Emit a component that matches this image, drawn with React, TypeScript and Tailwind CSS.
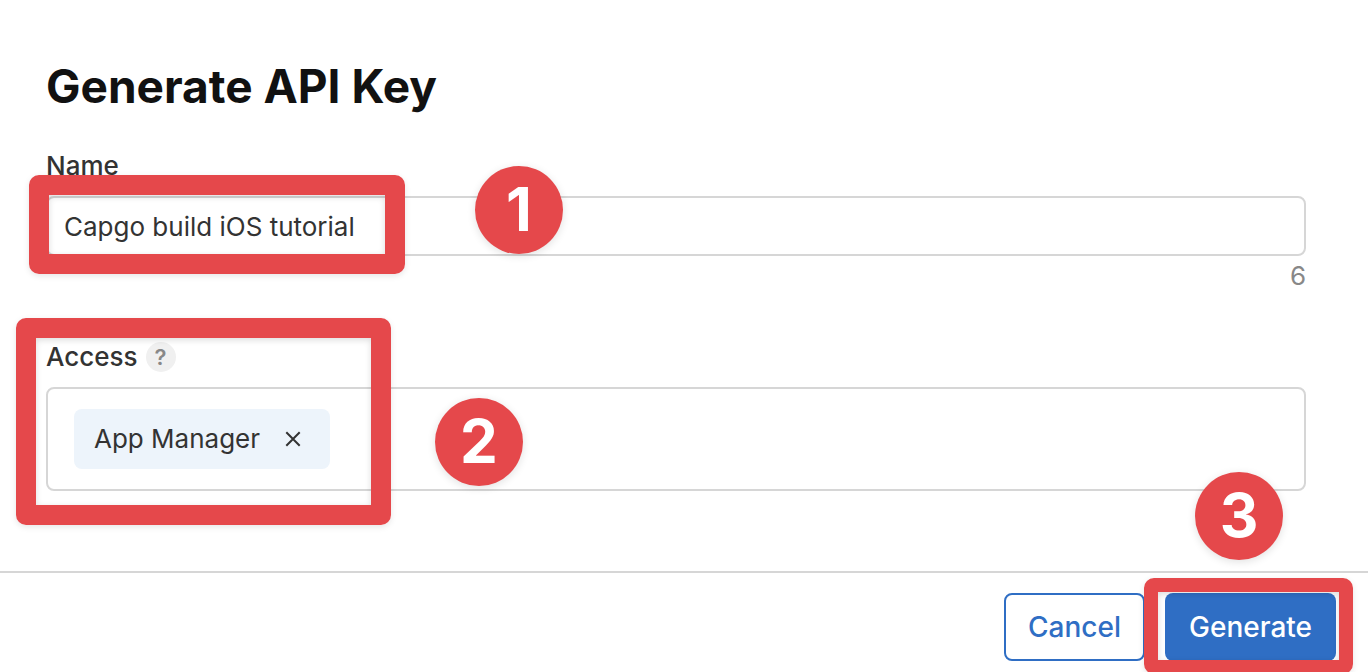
import { useState } from "react";
import type { ReactNode } from "react";

function Frame({ className }: { className: string }) {
  return (
    <div
      aria-hidden="true"
      className={`pointer-events-none absolute rounded-[10px] border-[#e5484b] shadow-[0_2px_6px_rgba(0,0,0,0.1),inset_0_2px_6px_rgba(0,0,0,0.14)] ${className}`}
    />
  );
}

function Step({ className, children }: { className: string; children: ReactNode }) {
  return (
    <span
      className={`pointer-events-none absolute flex size-[88px] items-center justify-center rounded-full bg-[#e5484b] pb-0.5 text-[60px] leading-none font-bold text-white shadow-[0_2px_8px_rgba(0,0,0,0.12)] ${className}`}
    >
      {children}
    </span>
  );
}

export default function App() {
  const [name, setName] = useState("Capgo build iOS tutorial");
  const [roles, setRoles] = useState(["App Manager"]);

  return (
    <form
      onSubmit={(e) => e.preventDefault()}
      className="flex min-h-screen flex-col overflow-hidden bg-white font-['Inter',sans-serif] text-[26px] leading-8 text-[#333]"
    >
      <main className="flex flex-col pt-14 pr-[62px] pb-20 pl-[46px]">
        <h1 className="text-[46px] leading-[60px] font-bold text-[#111]">Generate API Key</h1>

        <section className="mt-[34px] flex flex-col">
          <label htmlFor="key-name" className="font-medium">
            Name
          </label>
          <div className="relative mt-3.5">
            <input
              id="key-name"
              type="text"
              value={name}
              onChange={(e) => setName(e.target.value)}
              className="block h-[60px] w-full rounded-lg border-2 border-[#d6d6d6] px-4 outline-none"
            />
            <Frame className="-top-[21px] -left-[17px] h-[99px] w-[376px] border-[20px]" />
            <Step className="-top-[30px] left-[429px]">1</Step>
          </div>
          <output htmlFor="key-name" className="mt-1 self-end text-[#888]">
            {30 - name.length}
          </output>
        </section>

        <section className="relative mt-[49px] flex flex-col gap-3.5">
          <div className="flex items-center gap-2">
            <h2 id="access-label" className="font-medium">
              Access
            </h2>
            <button
              type="button"
              aria-label="About access"
              className="flex size-[30px] items-center justify-center rounded-full bg-[#f0f0f0] text-[22px] leading-none font-semibold text-[#888]"
            >
              ?
            </button>
          </div>
          <ul
            aria-labelledby="access-label"
            className="flex min-h-[104px] items-center gap-4 rounded-lg border-2 border-[#d6d6d6] px-[26px]"
          >
            {roles.map((role) => (
              <li key={role} className="flex h-[60px] items-center gap-6 rounded-lg bg-[#edf4fb] px-5">
                {role}
                <button
                  type="button"
                  aria-label={`Remove ${role}`}
                  onClick={() => setRoles(roles.filter((r) => r !== role))}
                  className="pr-2"
                >
                  <svg viewBox="0 0 18 18" className="size-[18px]" fill="none" stroke="currentColor" strokeWidth="2">
                    <path d="M2.3 2.3 15.7 15.7M15.7 2.3 2.3 15.7" />
                  </svg>
                </button>
              </li>
            ))}
          </ul>
          <Frame className="-top-[23px] -left-[30px] h-[207px] w-[375px] border-[20px]" />
          <Step className="top-[57px] left-[389px]">2</Step>
        </section>
      </main>

      <footer className="flex h-[101px] items-start justify-end gap-5 border-t-2 border-[#d6d6d6] pt-5 pr-8 text-[28px] font-medium">
        <button
          type="button"
          className="h-[68px] rounded-lg border-2 border-[#2f6ec4] px-[22px] text-[#2f6ec4]"
        >
          Cancel
        </button>
        <div className="relative">
          <button type="submit" className="h-[68px] rounded-lg bg-[#2f6ec4] px-6 text-white">
            Generate
          </button>
          <Frame className="-top-[15px] -right-[17px] -left-[21px] h-24 border-[14px]" />
          <Step className="-top-[121px] left-[30px]">3</Step>
        </div>
      </footer>
    </form>
  );
}
